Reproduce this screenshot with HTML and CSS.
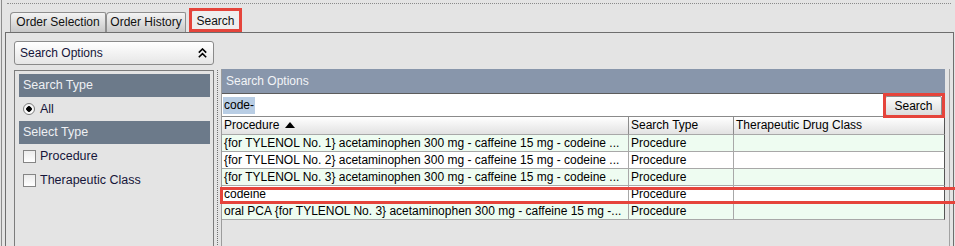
FILE: index.html
```html
<!DOCTYPE html>
<html lang="en">
<head>
    <meta charset="UTF-8">
    <title>Order Search</title>
    <link rel="stylesheet" href="styles.css">
</head>
<body>
    <div class="window">
        <div class="dots"></div>

        <!-- Tab strip -->
        <div class="tabs">
            <div class="tab tab-first">Order Selection</div>
            <div class="tab tab-second">Order History</div>
            <div class="tab tab-active marked">Search</div>
        </div>

        <div class="panel">
            <!-- Left column: collapsible options -->
            <div class="side">
                <button class="collapse" type="button">
                    <span>Search Options</span>
                    <svg class="chevrons" width="9" height="10" viewBox="0 0 9 10">
                        <polyline points="0.8,4.6 4.5,1 8.2,4.6" fill="none" stroke="#000" stroke-width="1.6"/>
                        <polyline points="0.8,9.2 4.5,5.6 8.2,9.2" fill="none" stroke="#000" stroke-width="1.6"/>
                    </svg>
                </button>
                <div class="options">
                    <div class="group-head">Search Type</div>
                    <label class="opt"><span class="radio"></span>All</label>
                    <div class="group-head">Select Type</div>
                    <label class="opt opt-check"><span class="check"></span>Procedure</label>
                    <label class="opt opt-check"><span class="check"></span>Therapeutic Class</label>
                </div>
            </div>

            <div class="splitter"></div>

            <!-- Right column: search field and results -->
            <div class="main">
                <div class="main-head">Search Options</div>
                <div class="search-row">
                    <span class="query">code-</span>
                    <button class="search-btn marked" type="button">Search</button>
                </div>
                <table class="results">
                    <colgroup>
                        <col class="col-name">
                        <col class="col-type">
                        <col class="col-class">
                    </colgroup>
                    <thead>
                        <tr>
                            <th>Procedure <svg class="sort" width="10" height="6" viewBox="0 0 10 6"><polygon points="0,6 5,0 10,6" fill="#000"/></svg></th>
                            <th>Search Type</th>
                            <th>Therapeutic Drug Class</th>
                        </tr>
                    </thead>
                    <tbody>
                        <tr class="alt">
                            <td>{for TYLENOL No. 1} acetaminophen 300 mg - caffeine 15 mg - codeine ...</td>
                            <td>Procedure</td>
                            <td></td>
                        </tr>
                        <tr>
                            <td>{for TYLENOL No. 2} acetaminophen 300 mg - caffeine 15 mg - codeine ...</td>
                            <td>Procedure</td>
                            <td></td>
                        </tr>
                        <tr class="alt">
                            <td>{for TYLENOL No. 3} acetaminophen 300 mg - caffeine 15 mg - codeine ...</td>
                            <td>Procedure</td>
                            <td></td>
                        </tr>
                        <tr>
                            <td class="marked">codeine</td>
                            <td>Procedure</td>
                            <td></td>
                        </tr>
                        <tr class="alt">
                            <td>oral PCA {for TYLENOL No. 3} acetaminophen 300 mg - caffeine 15 mg -...</td>
                            <td>Procedure</td>
                            <td></td>
                        </tr>
                    </tbody>
                </table>
            </div>
        </div>
    </div>
</body>
</html>
```

FILE: styles.css
```css
* {
    box-sizing: border-box;
}

body {
    margin: 0;
    background-color: #e4e4e4;
    font-family: "Liberation Sans", Arial, sans-serif;
    font-size: 12px;
    color: #111111;
    overflow: hidden;
}

.window {
    height: 246px;
    margin-left: 1px;
    border-left: 1px solid #8c8c8c;
    padding: 3px 0 0 3px;
    overflow: hidden;
}

.dots {
    margin-left: 2px;
    width: 944px;
    border-top: 1px dotted #8a8a8a;
}

/* Tabs */
.tabs {
    display: flex;
    align-items: flex-end;
    height: 28px;
    padding-left: 5px;
}

.tab {
    height: 20px;
    line-height: 19px;
    text-align: center;
    border: 1px solid #8e8e8e;
    border-bottom: none;
    border-radius: 4px 2px 0 0;
    background: linear-gradient(#f4f4f4, #c8c8c8);
}

.tab-first {
    width: 96px;
}

.tab-second {
    width: 80px;
}

.tab-active {
    width: 51px;
    height: 22px;
    line-height: 20px;
    margin-left: 4px;
    background: #eeeeee;
}

/* Red annotation boxes */
.marked {
    position: relative;
}

.marked::after {
    content: "";
    position: absolute;
    border: 3px solid #e5443b;
    pointer-events: none;
}

.tab-active::after {
    top: -3px;
    left: -2px;
    right: -2px;
    bottom: 0;
}

/* Main panel */
.panel {
    display: flex;
    width: 949px;
    height: 260px;
    border: 1px solid #6e6e6e;
    padding: 8px 0 0 8px;
}

.side {
    width: 200px;
    display: flex;
    flex-direction: column;
    gap: 5px;
}

.collapse {
    display: flex;
    align-items: center;
    justify-content: space-between;
    height: 24px;
    padding: 0 6px 0 5px;
    border: 1px solid #8a8a8a;
    border-radius: 3px;
    background: linear-gradient(#ffffff, #e6e6e6);
    font-family: inherit;
    font-size: 12px;
    color: #15153a;
}

.options {
    flex: 1;
    border: 1px solid #7c7c7c;
    padding: 3px 3px 0 4px;
}

.group-head {
    height: 23px;
    line-height: 23px;
    padding-left: 4px;
    background-color: #6c7a8a;
    color: #eef0f3;
    font-size: 12.5px;
}

.opt {
    display: flex;
    align-items: center;
    height: 24px;
    padding-left: 4px;
    color: #16163a;
    font-size: 12.5px;
}

.radio {
    width: 12px;
    height: 12px;
    margin-right: 5px;
    border: 1px solid #7d7d7d;
    border-radius: 50%;
    background: radial-gradient(circle, #000000 0 2.5px, transparent 3px), linear-gradient(#f2f2f2, #ffffff);
}

.check {
    width: 13px;
    height: 13px;
    margin-right: 4px;
    border: 1px solid #858585;
    background: linear-gradient(#ececec, #ffffff);
}

.splitter {
    width: 1px;
    margin: 29px 3px 0 3px;
    border-left: 1px dotted #707070;
}

.main {
    width: 729px;
    margin-top: 28px;
    border-left: 1px solid #9c9c9c;
    border-right: 1px solid #a2a2a2;
    padding-right: 4px;
}

.main-head {
    height: 25px;
    line-height: 24px;
    padding-left: 4px;
    background-color: #8896ab;
    border-bottom: 1px solid #5c5c5c;
    color: #f2f4f7;
}

.search-row {
    display: flex;
    align-items: center;
    justify-content: space-between;
    height: 23px;
    background-color: #ffffff;
    border-bottom: 1px solid #8a8a8a;
}

.query {
    margin-left: 1px;
    padding: 1px 1px 2px 1px;
    background-color: #b8cde4;
    color: #000000;
}

.search-btn {
    width: 57px;
    height: 20px;
    margin: 1px 3px 0 0;
    padding: 0;
    border: 1px solid #8c8c8c;
    border-radius: 2px;
    background: linear-gradient(#fbfbfb, #dcdcdc);
    font-family: inherit;
    font-size: 12px;
    color: #000000;
}

.search-btn::after {
    top: -4px;
    left: -3px;
    right: -4px;
    bottom: -3px;
}

/* Results table */
.results {
    width: 723px;
    table-layout: fixed;
    border-spacing: 0;
    color: #000000;
}

.col-name {
    width: 407px;
}

.col-type {
    width: 105px;
}

.col-class {
    width: 211px;
}

.results th,
.results td {
    padding: 0 0 0 2px;
    text-align: left;
    font-weight: normal;
    white-space: nowrap;
    overflow: hidden;
    border-right: 1px solid #a8a8a8;
    border-bottom: 1px solid #a8a8a8;
}

.results th {
    height: 18px;
    line-height: 17px;
    background: linear-gradient(#ffffff, #e2e2e2);
    border-right-color: #8c8c8c;
}

.results th:last-child,
.results td:last-child {
    border-right-color: #555555;
}

.results td {
    height: 17px;
    line-height: 16px;
    background-color: #ffffff;
}

.results tr.alt td {
    background-color: #eefcf1;
}

.sort {
    margin-left: 2px;
    vertical-align: 1px;
}

.results td.marked {
    overflow: visible;
}

.results td.marked::after {
    top: 1px;
    bottom: -2px;
    left: -2px;
    width: 745px;
}
```
